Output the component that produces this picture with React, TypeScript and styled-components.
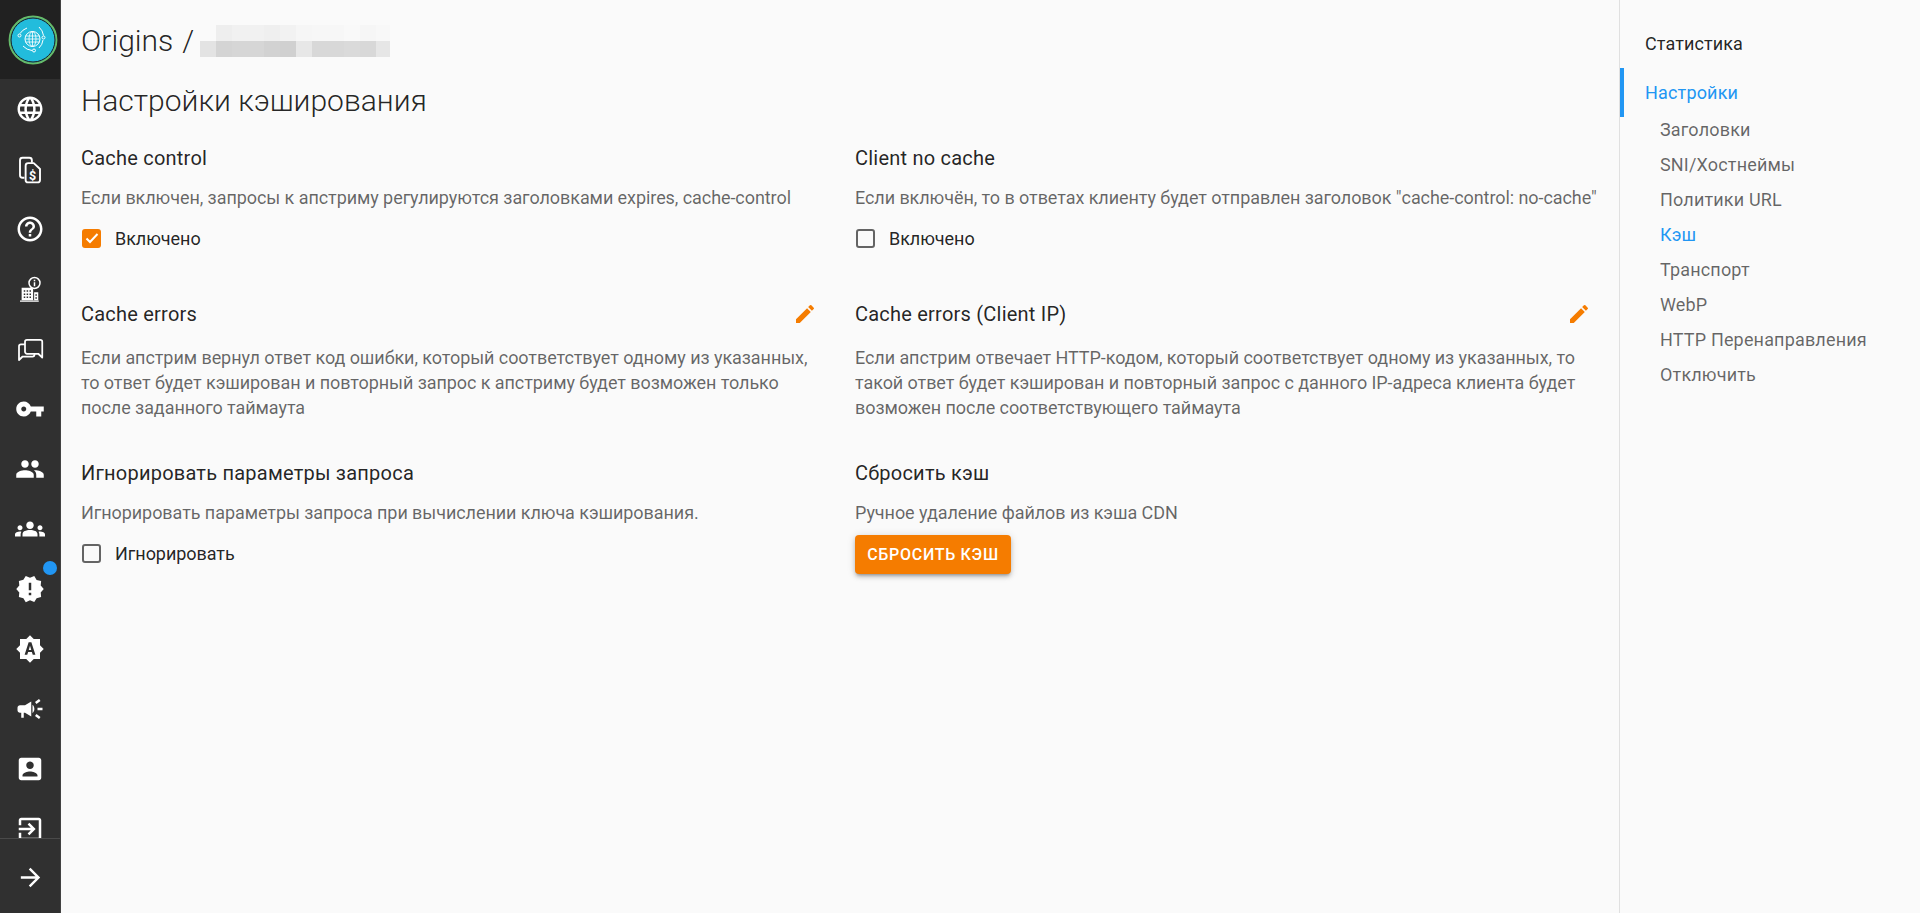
import React from "react";
import styled, { createGlobalStyle } from "styled-components";

const Global = createGlobalStyle`
  html, body { margin: 0; padding: 0; height: 100%; overflow: hidden; background: #fafafa; }
  #root { height: 100%; }
  * { box-sizing: border-box; }
`;
const Page = styled.div`
  display: flex; height: 913px; font-family: Roboto, "Liberation Sans", sans-serif; background: #fafafa; color: rgba(0,0,0,.87);
`;
const Rail = styled.nav`
  width: 61px; flex: none; background: #303030; display: flex; flex-direction: column; border-right: 1px solid #424242;
`;
const LogoBox = styled.div`
  height: 79px; flex: none; background: #212121; display: flex; align-items: center; justify-content: center; padding-left: 5px;
`;
const RailList = styled.div`
  flex: 1; min-height: 0; overflow: hidden; display: flex; flex-direction: column; align-items: center;
`;
const RailItem = styled.div`
  position: relative; flex: none; width: 60px; height: 60px; display: flex; align-items: center; justify-content: center; color: #fff;
  svg { width: 30px; height: 30px; fill: currentColor; display: block; }
`;
const Dot = styled.span`
  position: absolute; width: 14px; height: 14px; border-radius: 50%; background: #2196f3; top: 2px; right: 3px;
`;
const RailFoot = styled.div`
  height: 75px; flex: none; border-top: 1px solid #4a4a4a; display: flex; align-items: center; justify-content: center; color: #fff; padding-top: 3px;
  svg { width: 29px; height: 29px; fill: currentColor; }
`;
const Main = styled.main`
  flex: 1; min-width: 0; padding: 0 20px;
`;
const Crumbs = styled.div`
  height: 81px; display: flex; align-items: center; font-size: 30px; font-weight: 300;
`;
const Slash = styled.span`
  margin: 0 6px 0 9px;
`;
const PageTitle = styled.h1`
  margin: -2px 0 0; font-size: 30px; line-height: 44px; font-weight: 300;
`;
const Grid = styled.div`
  display: grid; grid-template-columns: 1fr 1fr; column-gap: 30px; margin-top: 20px;
`;
const Block = styled.section<{ $h: number }>`
  height: ${(p) => p.$h}px;
`;
const BlockTitle = styled.div`
  display: flex; align-items: center; justify-content: space-between; font-size: 20px; line-height: 30px; height: 30px; font-weight: 400; letter-spacing: .22px;
`;
const Desc = styled.p<{ $gap?: number }>`
  margin: ${(p) => p.$gap ?? 12}px 0 0; font-size: 18px; line-height: 25px; color: rgba(0,0,0,.6); white-space: pre; letter-spacing: -.07px;
`;
const Check = styled.label`
  display: flex; align-items: center; gap: 14px; height: 24px; margin-top: 16px; margin-left: 1px; font-size: 18px; letter-spacing: -.05px;
`;
const Box = styled.span<{ $on?: boolean }>`
  width: 19px; height: 19px; border-radius: 3px; display: flex; align-items: center; justify-content: center; flex: none;
  background: ${(p) => (p.$on ? "#f57c00" : "transparent")};
  border: ${(p) => (p.$on ? "none" : "2px solid rgba(0,0,0,.6)")};
  svg { width: 16px; height: 16px; }
`;
const Edit = styled.span`
  color: #f57c00; display: flex; margin-right: 8px;
  svg { width: 24px; height: 24px; fill: currentColor; }
`;
const Btn = styled.button`
  display: block; margin-top: 10px; width: 156px; height: 39px; border: none; border-radius: 4px; background: #f57c00; color: #fff;
  font: 500 16px Roboto, sans-serif; letter-spacing: .7px; padding: 0;
  box-shadow: 0 3px 3px -2px rgba(0,0,0,.25), 0 3px 4px rgba(0,0,0,.16), 0 1px 8px rgba(0,0,0,.14);
`;
const Side = styled.aside`
  width: 301px; flex: none; border-left: 1px solid #e0e0e0; padding-top: 27px;
`;
const SideTop = styled.div`
  height: 34px; line-height: 34px; padding-left: 25px; font-size: 18px; letter-spacing: .1px;
`;
const SideActive = styled.div`
  margin-top: 7px; height: 49px; line-height: 49px; padding-left: 21px; font-size: 18px; letter-spacing: .17px; color: #2196f3; border-left: 4px solid #2196f3;
`;
const SubList = styled.div`
  margin-top: -5px;
`;
const SideSub = styled.div<{ $on?: boolean }>`
  height: 35px; line-height: 35px; padding-left: 40px; font-size: 18px; letter-spacing: .17px; color: ${(p) => (p.$on ? "#2196f3" : "rgba(0,0,0,.6)")};
`;

const Ic = ({ d }: { d: string }) => <svg viewBox="0 0 24 24"><path d={d} fillRule="evenodd" /></svg>;

const mosaic: [number, number, string][] = [
  [216,19,"#eeeeee"],[232,19,"#f1f1f1"],[248,19,"#f1f1f1"],[264,19,"#efefef"],[280,19,"#f2f2f2"],[296,19,"#f6f6f6"],[312,19,"#f7f7f7"],[328,19,"#f7f7f7"],[344,19,"#f9f9f9"],[360,19,"#f6f6f6"],[376,19,"#f8f8f8"],
  [200,35,"#e3e3e3"],[216,35,"#d4d4d4"],[232,35,"#d6d6d6"],[248,35,"#d6d6d6"],[264,35,"#d2d2d2"],[280,35,"#d0d0d0"],[296,35,"#e7e7e7"],[312,35,"#d8d8d8"],[328,35,"#d8d8d8"],[344,35,"#dadada"],[360,35,"#d8d8d8"],[376,35,"#e6e6e6"],
];

const Mosaic = () => (
  <svg width="190" height="32" viewBox="200 19 190 32" aria-hidden>
    {mosaic.map(([x, y, c]) => <rect key={`${x}-${y}`} x={x} y={y} width="16" height="16" fill={c} />)}
  </svg>
);

const Logo = () => (
  <svg width="50" height="50" viewBox="0 0 50 50" aria-hidden>
    <circle cx="25" cy="25" r="23.4" fill="#22bcdc" stroke="#66bb6a" strokeWidth="2" />
    <circle cx="25" cy="25" r="22" fill="none" stroke="#1a1a1a" strokeWidth="1" />
    <g fill="none" stroke="#fff">
      <circle cx="24.500" cy="24" r="7.500" strokeWidth="1" />
      <ellipse cx="24.500" cy="24" rx="3.500" ry="7.500" strokeWidth=".8" />
      <path d="M17.500 21h14M17.500 24h14M17.500 27h14M24.500 16.500v15" strokeWidth=".8" />
      <path d="M12 18.500a14 14 0 0 1 7-5.500M31 12a14 14 0 0 1 4.500 8.500M35 25a13 13 0 0 1-4 8M15 31a14 14 0 0 0 9 4.500" strokeWidth="1" />
      <circle cx="11.500" cy="20.500" r="1.500" strokeWidth="1" /><circle cx="35.500" cy="22.500" r="1.500" strokeWidth="1" /><circle cx="26" cy="35.500" r="1.500" strokeWidth="1" />
    </g>
  </svg>
);

const icons = [
  "M11.99 2C6.47 2 2 6.48 2 12s4.47 10 9.99 10C17.52 22 22 17.52 22 12S17.52 2 11.99 2zm6.93 6h-2.95c-.32-1.25-.78-2.45-1.38-3.56 1.84.63 3.37 1.91 4.33 3.56zM12 4.04c.83 1.2 1.48 2.53 1.91 3.96h-3.82c.43-1.43 1.08-2.76 1.91-3.96zM4.26 14C4.1 13.36 4 12.69 4 12s.1-1.36.26-2h3.38c-.08.66-.14 1.32-.14 2s.06 1.34.14 2H4.26zm.82 2h2.95c.32 1.25.78 2.45 1.38 3.56-1.84-.63-3.37-1.9-4.33-3.56zm2.95-8H5.08c.96-1.66 2.49-2.93 4.33-3.56C8.81 5.55 8.35 6.75 8.03 8zM12 19.96c-.83-1.2-1.48-2.53-1.91-3.96h3.82c-.43 1.43-1.08 2.76-1.91 3.96zM14.34 14H9.66c-.09-.66-.16-1.32-.16-2s.07-1.35.16-2h4.68c.09.65.16 1.32.16 2s-.07 1.34-.16 2zm.25 5.56c.6-1.11 1.06-2.31 1.38-3.56h2.95c-.96 1.65-2.49 2.93-4.33 3.56zM16.36 14c.08-.66.14-1.32.14-2s-.06-1.34-.14-2h3.38c.16.64.26 1.31.26 2s-.1 1.36-.26 2h-3.38z",
  "",
  "M11 18h2v-2h-2v2zm1-16C6.48 2 2 6.48 2 12s4.48 10 10 10 10-4.48 10-10S17.52 2 12 2zm0 18c-4.41 0-8-3.59-8-8s3.59-8 8-8 8 3.59 8 8-3.59 8-8 8zm0-14c-2.21 0-4 1.79-4 4h2c0-1.1.9-2 2-2s2 .9 2 2c0 2-3 1.75-3 5h2c0-2.25 3-2.5 3-5 0-2.21-1.79-4-4-4z",
  "",
  "",
  "M12.65 10C11.83 7.67 9.61 6 7 6c-3.31 0-6 2.69-6 6s2.69 6 6 6c2.61 0 4.83-1.67 5.65-4H17v4h4v-4h2v-4H12.65zM7 14c-1.1 0-2-.9-2-2s.9-2 2-2 2 .9 2 2-.9 2-2 2z",
  "M16 11c1.66 0 2.99-1.34 2.99-3S17.66 5 16 5c-1.66 0-3 1.34-3 3s1.34 3 3 3zm-8 0c1.66 0 2.99-1.34 2.99-3S9.66 5 8 5C6.34 5 5 6.34 5 8s1.34 3 3 3zm0 2c-2.33 0-7 1.17-7 3.5V19h14v-2.5c0-2.33-4.67-3.5-7-3.5zm8 0c-.29 0-.62.02-.97.05 1.16.84 1.97 1.97 1.97 3.45V19h6v-2.5c0-2.33-4.67-3.5-7-3.5z",
  "M12 12.75c1.63 0 3.07.39 4.24.9 1.08.48 1.76 1.56 1.76 2.73V18H6v-1.61c0-1.18.68-2.26 1.76-2.73 1.17-.52 2.61-.91 4.24-.91zM4 13c1.1 0 2-.9 2-2s-.9-2-2-2-2 .9-2 2 .9 2 2 2zm1.13 1.1C4.76 14.04 4.39 14 4 14c-.99 0-1.93.21-2.78.58C.48 14.9 0 15.62 0 16.43V18h4.5v-1.61c0-.83.23-1.61.63-2.29zM20 13c1.1 0 2-.9 2-2s-.9-2-2-2-2 .9-2 2 .9 2 2 2zm4 3.43c0-.81-.48-1.53-1.22-1.85-.85-.37-1.79-.58-2.78-.58-.39 0-.76.04-1.13.1.4.68.63 1.46.63 2.29V18H24v-1.57zM12 6c1.66 0 3 1.34 3 3s-1.34 3-3 3-3-1.34-3-3 1.34-3 3-3z",
  "M23 12l-2.44-2.79.34-3.69-3.61-.82-1.89-3.2L12 2.96 8.6 1.5 6.71 4.69 3.1 5.5l.34 3.7L1 12l2.44 2.79-.34 3.7 3.61.82L8.6 22.5l3.4-1.47 3.4 1.46 1.89-3.19 3.61-.82-.34-3.69L23 12zM13 17h-2v-2h2v2zm0-4h-2V7h2v6z",
  "M12 1L9 4H4v5l-3 3 3 3v5h5l3 3 3-3h5v-5l3-3-3-3V4h-5L12 1zM10.900 6.500h2.200l3.200 10h-2.100l-.7-2.200H10.500l-.7 2.200H7.700L10.900 6.500zm1.100 2.800L11 12.700h2L12 9.300z",
  "M18 11v2h4v-2h-4zm-2 6.610c.96.710 2.210 1.650 3.200 2.390.400-.530.800-1.070 1.200-1.600-.990-.740-2.240-1.680-3.200-2.400-.400.540-.800 1.080-1.200 1.610zM20.400 5.600c-.400-.530-.800-1.070-1.200-1.600-.990.740-2.240 1.680-3.200 2.400.400.530.800 1.070 1.200 1.600.960-.720 2.210-1.650 3.200-2.400zM4 9c-1.100 0-2 .900-2 2v2c0 1.100.900 2 2 2h1v4h2v-4h1l5 3V6L8 9H4zm11.500 3c0-1.330-.580-2.530-1.500-3.350v6.690c.920-.810 1.500-2.010 1.500-3.340z",
  "M3 5v14c0 1.100.890 2 2 2h14c1.100 0 2-.900 2-2V5c0-1.100-.900-2-2-2H5c-1.110 0-2 .900-2 2zm12 4c0 1.660-1.340 3-3 3s-3-1.340-3-3 1.340-3 3-3 3 1.340 3 3zm-9 8c0-2 4-3.100 6-3.100s6 1.100 6 3.100v1H6v-1z",
  "M10.090 15.590 11.500 17l5-5-5-5-1.410 1.410L12.670 11H3v2h9.670l-2.580 2.590zM19 3H5c-1.110 0-2 .900-2 2v4h2V5h14v14H5v-4H3v4c0 1.100.890 2 2 2h14c1.100 0 2-.900 2-2V5c0-1.100-.900-2-2-2z",
];

const Bill = () => (
  <svg viewBox="0 0 24 24" aria-hidden>
    <g fill="none" stroke="#fff" strokeWidth="1.500" strokeLinejoin="round">
      <path d="M7.500 19H6a2 2 0 0 1-2-2V5a2 2 0 0 1 2-2h5.500a2 2 0 0 1 2 2v2" />
      <path d="M10.500 7.300h4.500l5 4.700v8.700a2 2 0 0 1-2 2h-7.500a2 2 0 0 1-2-2V9.300a2 2 0 0 1 2-2z" />
    </g>
    <text x="14" y="20.500" fontSize="10" fontWeight="700" fontFamily="Roboto" textAnchor="middle" fill="#fff">$</text>
  </svg>
);
const Org = () => (
  <svg viewBox="0 0 24 24" aria-hidden>
    <path d="M4 21.200h15v1H4z" />
    <path d="M5.300 11h9.200v10H5.300zM15.300 14.500h3.300V21h-3.300z" />
    <path fill="#303030" d="M7 13h1.200v1.200H7zM9.300 13h1.200v1.200H9.300zM11.600 13h1.200v1.200h-1.200zM7 15.500h1.200v1.200H7zM9.300 15.500h1.200v1.200H9.300zM11.600 15.500h1.200v1.200h-1.200zM7 18h1.200v1.200H7zM9.300 18h1.200v1.200H9.300zM11.600 18h1.200v1.200h-1.200zM16.300 16.200h1.200v1.200h-1.200zM16.300 18.500h1.200v1.200h-1.200z" />
    <circle cx="15.600" cy="7.200" r="4.400" fill="#303030" stroke="#fff" strokeWidth="1.200" />
    <path d="M15 6.600h1.200v3.200H15zM15 4.500h1.200v1.200H15z" />
  </svg>
);
const Chat = () => (
  <svg viewBox="0 0 24 24" aria-hidden>
    <g fill="none" stroke="#fff" strokeWidth="1.400" strokeLinejoin="round">
      <path d="M8 6.200a1.600 1.600 0 0 1 1.600-1.600h10.600a1.600 1.600 0 0 1 1.600 1.600v12.600l-3.200-3H9.600A1.600 1.600 0 0 1 8 14.200z" />
      <path d="M8 8.200H4.800a1.600 1.600 0 0 0-1.600 1.600v11l2.900-2.800H14a1.600 1.600 0 0 0 1.600-1.600v-.6" />
    </g>
  </svg>
);
const Pencil = () => (
  <svg viewBox="0 0 24 24" aria-hidden><path d="M3 17.250V21h3.750L17.810 9.940l-3.750-3.750L3 17.250zM20.710 7.040a.996.996 0 0 0 0-1.410l-2.340-2.340a.996.996 0 0 0-1.410 0l-1.830 1.830 3.750 3.750 1.830-1.830z" /></svg>
);

export default function App() {
  return (
    <Page>
      <Global />
      <Rail>
        <LogoBox><Logo /></LogoBox>
        <RailList>
          {icons.map((d, i) => (
            <RailItem key={i}>
              {i === 1 ? <Bill /> : i === 3 ? <Org /> : i === 4 ? <Chat /> : <Ic d={d} />}
              {i === 8 && <Dot />}
            </RailItem>
          ))}
        </RailList>
        <RailFoot>
          <svg viewBox="0 0 24 24"><path d="M12 4l-1.410 1.410L16.170 11H4v2h12.170l-5.580 5.590L12 20l8-8z" /></svg>
        </RailFoot>
      </Rail>
      <Main>
        <Crumbs>Origins<Slash>/</Slash><Mosaic /></Crumbs>
        <PageTitle>Настройки кэширования</PageTitle>
        <Grid>
          <Block $h={156}>
            <BlockTitle>Cache control</BlockTitle>
            <Desc>Если включен, запросы к апстриму регулируются заголовками expires, cache-control</Desc>
            <Check><Box $on><svg viewBox="0 0 16 16"><path d="M2.500 8.500l3.500 3.500 7.500-8" fill="none" stroke="#fff" strokeWidth="2" /></svg></Box>Включено</Check>
          </Block>
          <Block $h={156}>
            <BlockTitle>Client no cache</BlockTitle>
            <Desc>Если включён, то в ответах клиенту будет отправлен заголовок "cache-control: no-cache"</Desc>
            <Check><Box />Включено</Check>
          </Block>
          <Block $h={159}>
            <BlockTitle>Cache errors<Edit><Pencil /></Edit></BlockTitle>
            <Desc $gap={16}>{"Если апстрим вернул ответ код ошибки, который соответствует одному из указанных,\nто ответ будет кэширован и повторный запрос к апстриму будет возможен только\nпосле заданного таймаута"}</Desc>
          </Block>
          <Block $h={159}>
            <BlockTitle>Cache errors (Client IP)<Edit><Pencil /></Edit></BlockTitle>
            <Desc $gap={16}>{"Если апстрим отвечает HTTP-кодом, который соответствует одному из указанных, то\nтакой ответ будет кэширован и повторный запрос с данного IP-адреса клиента будет\nвозможен после соответствующего таймаута"}</Desc>
          </Block>
          <Block $h={150}>
            <BlockTitle>Игнорировать параметры запроса</BlockTitle>
            <Desc>Игнорировать параметры запроса при вычислении ключа кэширования.</Desc>
            <Check><Box />Игнорировать</Check>
          </Block>
          <Block $h={150}>
            <BlockTitle>Сбросить кэш</BlockTitle>
            <Desc>Ручное удаление файлов из кэша CDN</Desc>
            <Btn>СБРОСИТЬ КЭШ</Btn>
          </Block>
        </Grid>
      </Main>
      <Side>
        <SideTop>Статистика</SideTop>
        <SideActive>Настройки</SideActive>
        <SubList>
          {["Заголовки", "SNI/Хостнеймы", "Политики URL", "Кэш", "Транспорт", "WebP", "HTTP Перенаправления", "Отключить"].map((t) => (
            <SideSub key={t} $on={t === "Кэш"}>{t}</SideSub>
          ))}
        </SubList>
      </Side>
    </Page>
  );
}
